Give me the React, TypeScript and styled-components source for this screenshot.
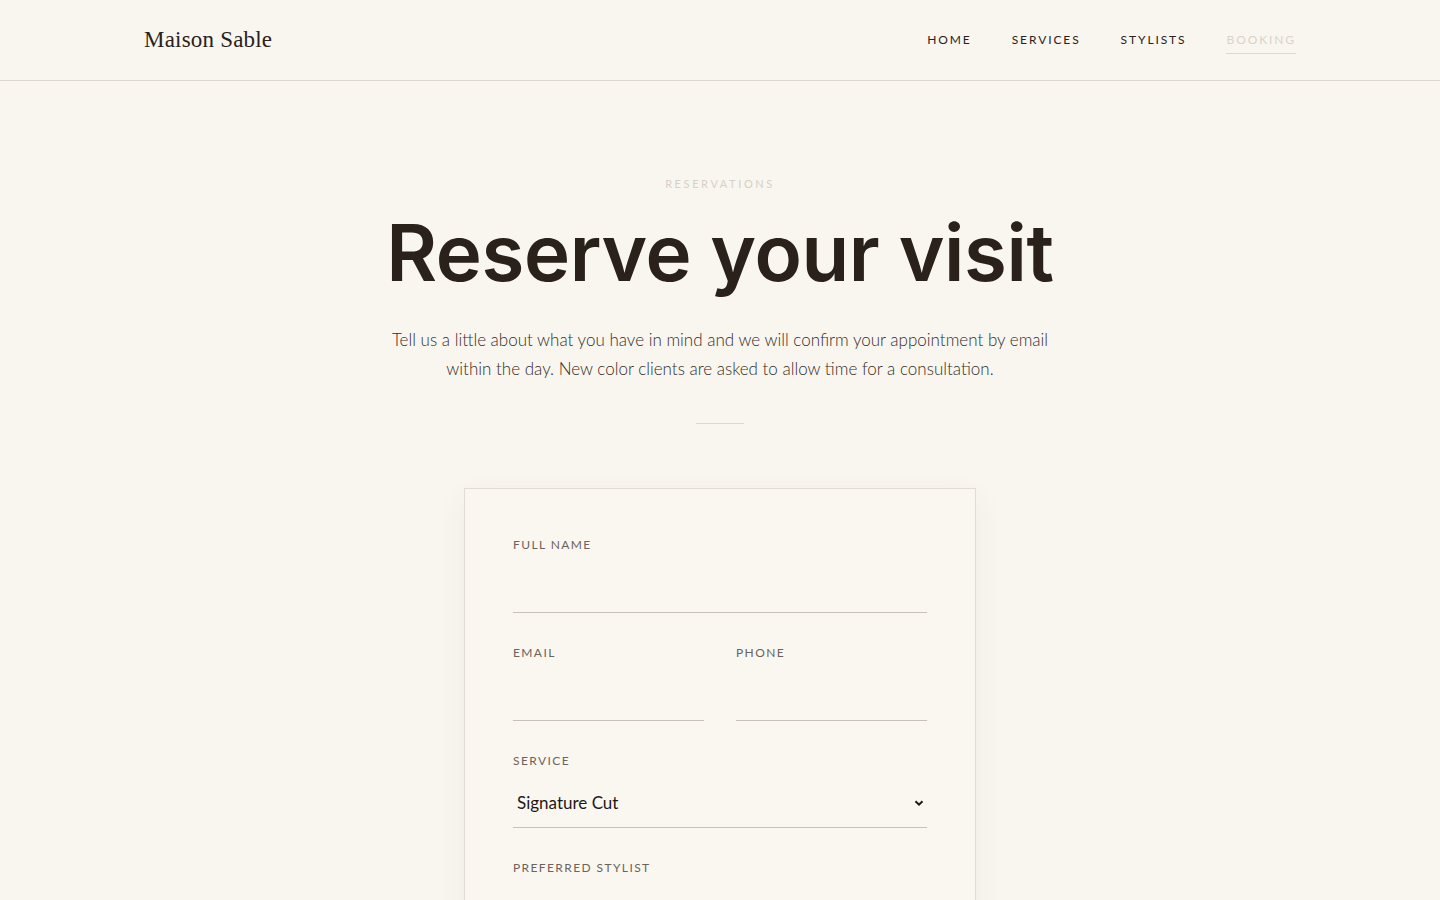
import React from 'react';
import styled, { createGlobalStyle } from 'styled-components';

const GlobalStyle = createGlobalStyle`
  html, body {
    margin: 0;
    padding: 0;
    background: #f9f6f0;
    color: #2a211b;
    font-family: Lato, "Open Sans", sans-serif;
  }
  * { box-sizing: border-box; }
`;

const Header = styled.header`
  height: 81px;
  border-bottom: 1px solid #ddd7cf;
`;

const HeaderInner = styled.div`
  width: 1152px;
  height: 80px;
  margin: 0 auto;
  display: flex;
  align-items: center;
  justify-content: space-between;
`;

const Logo = styled.a`
  font-family: "Liberation Serif", "DejaVu Serif", serif;
  font-size: 23px;
  color: #2a211b;
  text-decoration: none;
  letter-spacing: 0.2px;
`;

const Nav = styled.nav`
  display: flex;
  gap: 40px;
  align-items: center;
`;

const NavLink = styled.a<{ $active?: boolean }>`
  font-family: Lato, sans-serif;
  font-size: 12px;
  font-weight: 400;
  letter-spacing: 1.9px;
  line-height: 15px;
  text-transform: uppercase;
  text-decoration: none;
  color: ${(p) => (p.$active ? '#d9d3cb' : '#2a211b')};
  padding: 6px 0;
  border-bottom: 1px solid ${(p) => (p.$active ? '#ddd7cf' : 'transparent')};
`;

const Hero = styled.section`
  display: flex;
  flex-direction: column;
  align-items: center;
  padding-top: 96px;
`;

const Eyebrow = styled.div`
  font-size: 11px;
  letter-spacing: 2.6px;
  text-transform: uppercase;
  color: #d6d0c7;
  line-height: 14px;
`;

const Title = styled.h1`
  margin: 16px 0 0;
  font-family: Inter, sans-serif;
  font-weight: 600;
  font-size: 78px;
  line-height: 92px;
  letter-spacing: -0.4px;
  color: #2a211b;
`;

const Lead = styled.p`
  margin: 26px 0 0;
  max-width: 700px;
  text-align: center;
  font-size: 17px;
  font-weight: 300;
  line-height: 29px;
  color: #362d27;
`;

const Rule = styled.hr`
  width: 48px;
  border: 0;
  border-top: 1px solid #ddd6cc;
  margin: 40px 0 0;
`;

const Card = styled.form`
  width: 512px;
  margin-top: 64px;
  border: 1px solid #e2dcd4;
  background: #faf7f1;
  box-shadow: 0 10px 30px rgba(60, 40, 20, 0.06);
  padding: 48px 48px 40px;
  display: flex;
  flex-direction: column;
  gap: 32px;
`;

const Row = styled.div`
  display: grid;
  grid-template-columns: minmax(0, 1fr) minmax(0, 1fr);
  gap: 32px;
`;

const Field = styled.label`
  display: flex;
  flex-direction: column;
  min-width: 0;
`;

const Label = styled.span`
  font-size: 12px;
  letter-spacing: 1.4px;
  text-transform: uppercase;
  color: #6b635c;
  line-height: 16px;
`;

const Input = styled.input`
  margin-top: 12px;
  width: 100%;
  height: 48px;
  border: 0;
  border-bottom: 1px solid #c9c1b7;
  background: transparent;
  font-family: Lato, sans-serif;
  font-size: 17px;
  color: #2a211b;
  outline: none;
  padding: 0 4px;
`;

const SelectWrap = styled.div`
  position: relative;
  margin-top: 12px;
`;

const Select = styled.select`
  width: 100%;
  height: 47px;
  appearance: none;
  border: 0;
  border-bottom: 1px solid #c9c1b7;
  border-radius: 0;
  background: transparent;
  font-family: Lato, sans-serif;
  font-size: 17px;
  color: #1f1915;
  padding: 0 4px 3px;
  outline: none;
`;

const Chevron = styled.svg`
  position: absolute;
  right: 2px;
  top: 16px;
  pointer-events: none;
`;

export default function App() {
  return (
    <>
      <GlobalStyle />
      <Header>
        <HeaderInner>
          <Logo href="#">Maison Sable</Logo>
          <Nav>
            <NavLink href="#">Home</NavLink>
            <NavLink href="#">Services</NavLink>
            <NavLink href="#">Stylists</NavLink>
            <NavLink href="#" $active>Booking</NavLink>
          </Nav>
        </HeaderInner>
      </Header>
      <Hero>
        <Eyebrow>Reservations</Eyebrow>
        <Title>Reserve your visit</Title>
        <Lead>
          Tell us a little about what you have in mind and we will confirm your appointment by email
          within the day. New color clients are asked to allow time for a consultation.
        </Lead>
        <Rule />
        <Card>
          <Field>
            <Label>Full name</Label>
            <Input type="text" />
          </Field>
          <Row>
            <Field>
              <Label>Email</Label>
              <Input type="email" />
            </Field>
            <Field>
              <Label>Phone</Label>
              <Input type="tel" />
            </Field>
          </Row>
          <Field as="div">
            <Label>Service</Label>
            <SelectWrap>
              <Select defaultValue="cut">
                <option value="cut">Signature Cut</option>
                <option value="color">Color</option>
              </Select>
              <Chevron width="12" height="12" viewBox="0 0 12 12">
                <path d="M2.5 4.2 6 7.7 9.5 4.2" fill="none" stroke="#1f1915" strokeWidth="2" />
              </Chevron>
            </SelectWrap>
          </Field>
          <Field>
            <Label>Preferred stylist</Label>
            <Input type="text" />
          </Field>
        </Card>
      </Hero>
    </>
  );
}
